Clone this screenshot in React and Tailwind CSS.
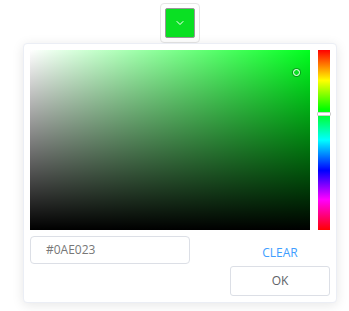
import { ChevronDown } from 'lucide-react'

const hue = 127
const thumbTop = Math.round((hue / 360) * 180) - 2

function App() {
  return (
    <div className="min-h-[311px] bg-white pt-[3px] font-['Open_Sans',sans-serif]">
      {/* trigger */}
      <div className="ml-[160px] h-[40px] w-[40px] rounded-[4px] border border-[#e6e6e6] p-[4px]">
        <div className="flex h-full w-full items-center justify-center rounded-[2px] border border-[#999] bg-[#0AE023]">
          <ChevronDown className="h-[12px] w-[12px] text-white" strokeWidth={2} />
        </div>
      </div>

      {/* dropdown */}
      <div className="ml-[23px] w-[314px] rounded-[4px] border border-[#ebeef5] bg-white p-[6px] shadow-[0_2px_12px_0_rgba(0,0,0,0.1)]">
        <div className="flex gap-[8px]">
          <div
            className="relative h-[180px] w-[280px]"
            style={{ backgroundColor: `hsl(${hue}, 100%, 50%)` }}
          >
            <div className="absolute inset-0 bg-gradient-to-r from-white to-transparent" />
            <div className="absolute inset-0 bg-gradient-to-t from-black to-transparent" />
            <div className="absolute left-[263px] top-[19px] h-[7px] w-[7px] rounded-full border-[1.5px] border-white shadow-[0_0_0_1px_rgba(0,0,0,0.3)]" />
          </div>
          <div className="relative h-[180px] w-[12px] bg-[linear-gradient(to_bottom,#f00_0%,#ff0_17%,#0f0_33%,#0ff_50%,#00f_67%,#f0f_83%,#f00_100%)]">
            <div
              className="absolute left-[-1px] right-[-1px] h-[4px] rounded-[1px] border border-[#ccc] bg-white"
              style={{ top: thumbTop }}
            />
          </div>
        </div>

        <div className="mt-[6px] flex justify-between">
          <div className="flex h-[28px] w-[160px] items-center rounded-[4px] border border-[#dcdfe6] px-[15px] text-[12px] text-[#777]">
            #0AE023
          </div>
          <div className="flex w-[100px] flex-col items-center">
            <div className="flex h-[30px] items-end pb-[4px] text-[12px] font-medium text-[#409eff]">
              CLEAR
            </div>
            <button className="h-[30px] w-[100px] rounded-[3px] border border-[#dcdfe6] bg-white text-[12px] text-[#606266]">
              OK
            </button>
          </div>
        </div>
      </div>
    </div>
  )
}

export default App
